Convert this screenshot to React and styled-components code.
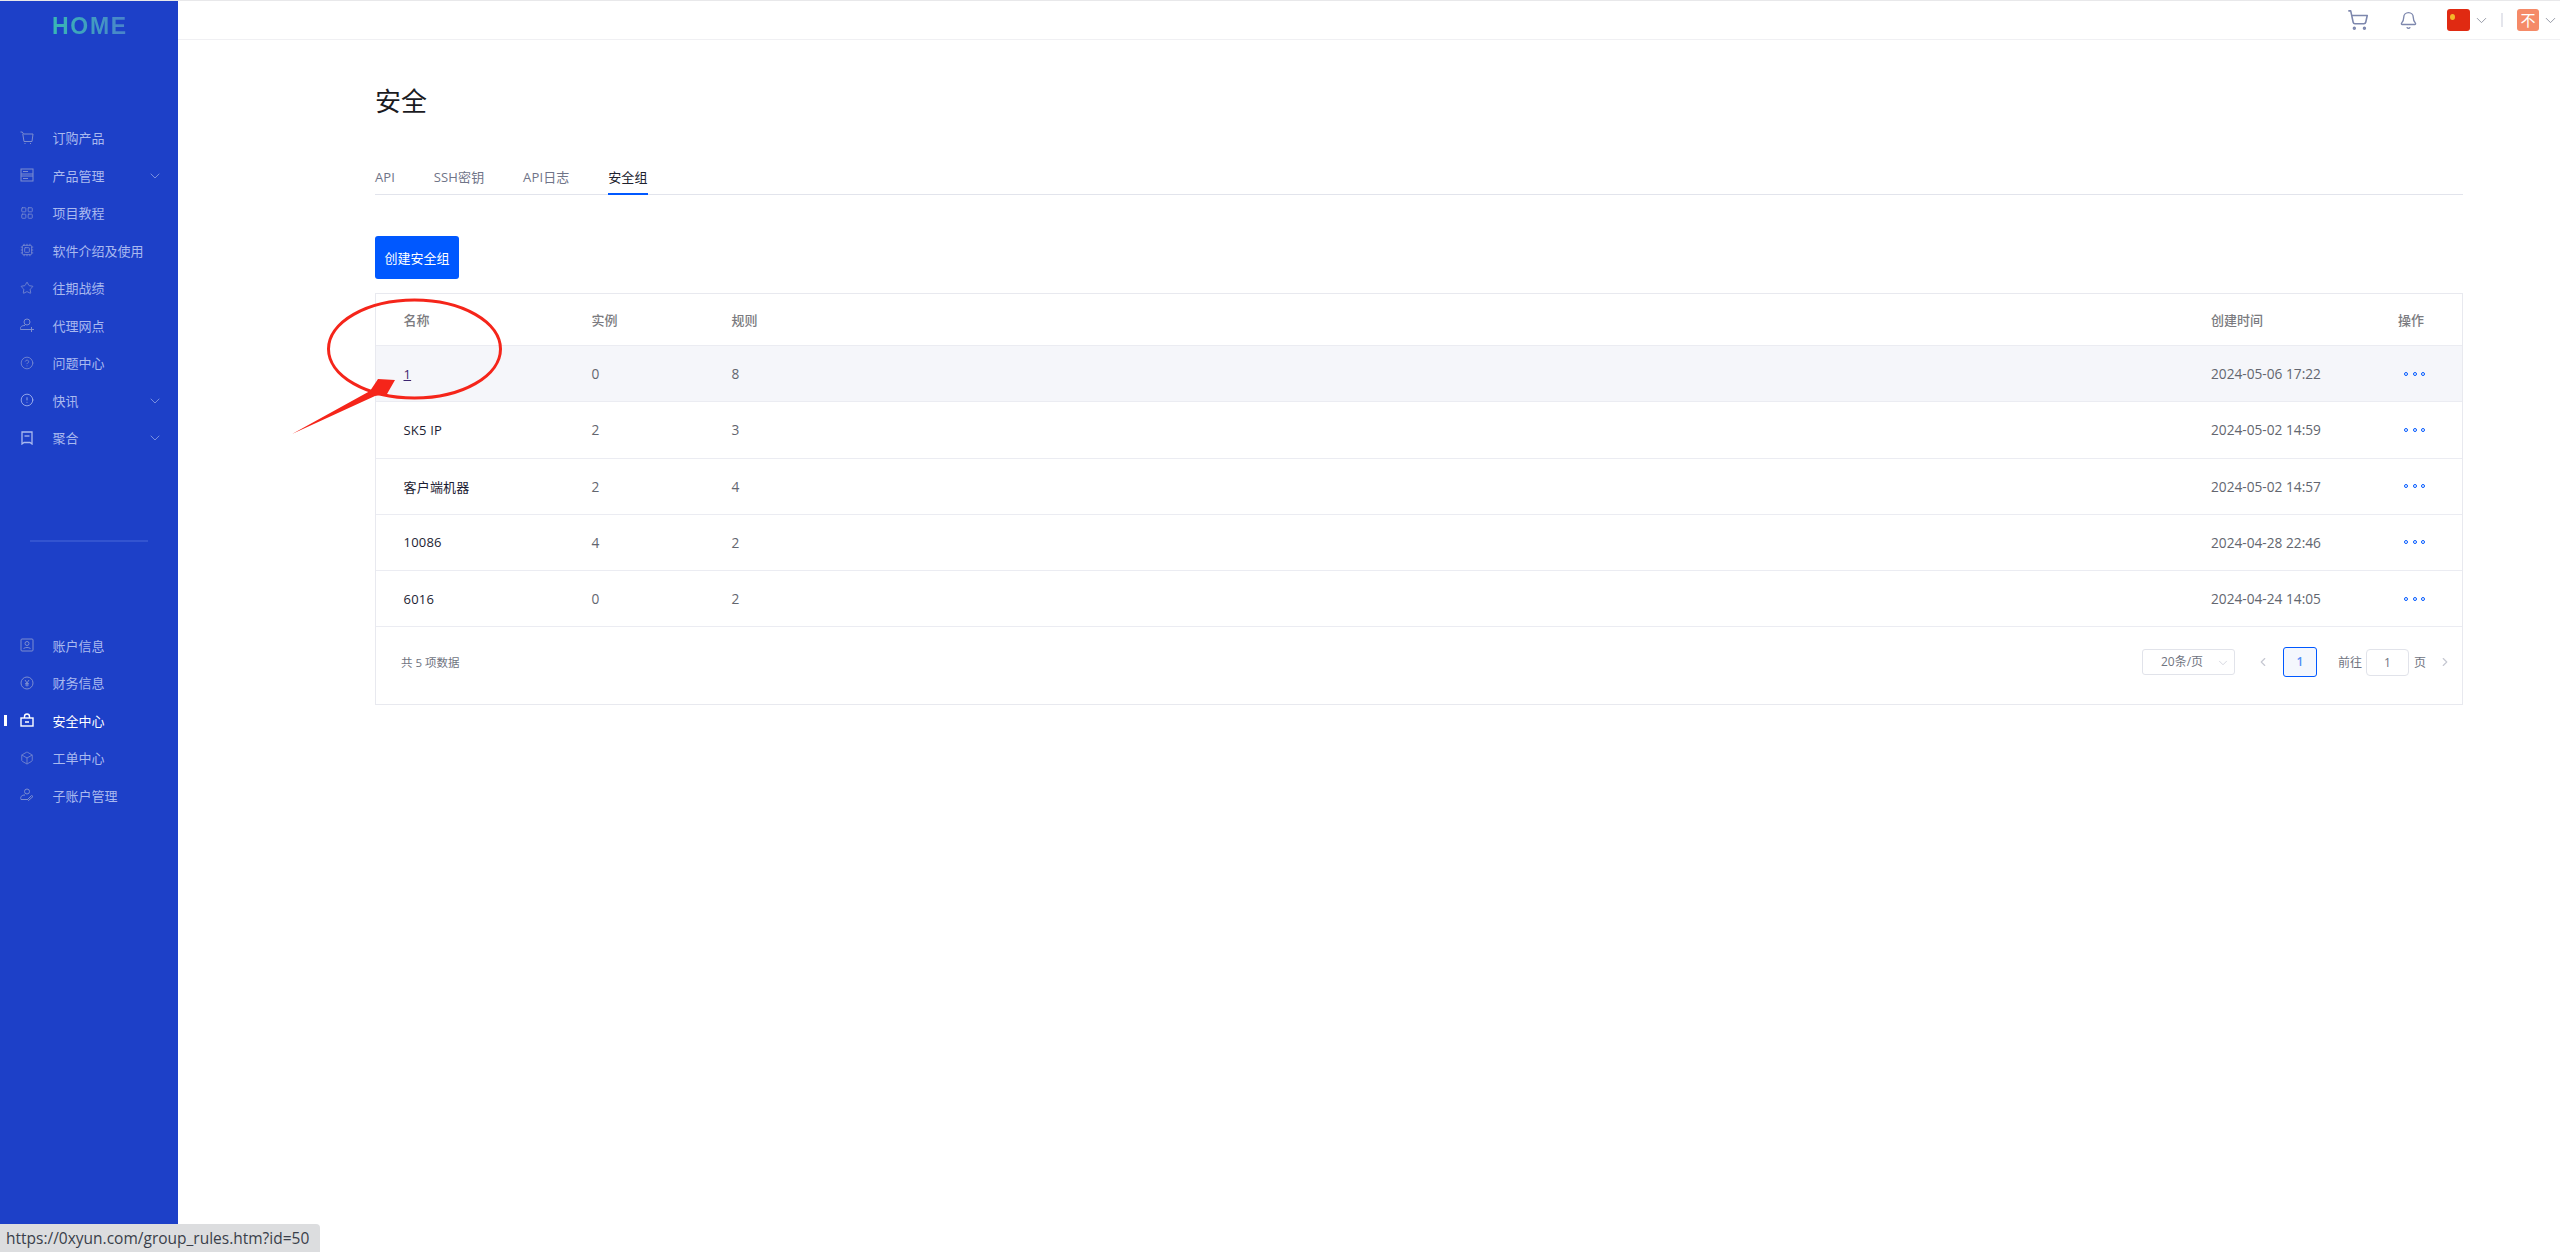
import React from 'react';
import styled, { createGlobalStyle } from 'styled-components';
import {
  Bell,
  Box,
  ChevronDown,
  ChevronLeft,
  ChevronRight,
  CircleAlert,
  CircleHelp,
  Cpu,
  LayoutGrid,
  ShoppingCart,
  Star,
} from 'lucide-react';

const GlobalStyle = createGlobalStyle`
  html, body {
    margin: 0;
    padding: 0;
    background: #fff;
  }
  body {
    font-family: "Open Sans", "Noto Sans CJK SC", sans-serif;
    font-size: 13px;
  }
  * {
    box-sizing: border-box;
  }
`;

const Page = styled.div`
  position: relative;
  display: flex;
  width: 2560px;
  height: 1252px;
  overflow: hidden;
  border-top: 1px solid #e8e8ea;
`;

const Sidebar = styled.aside`
  width: 178px;
  flex-shrink: 0;
  display: flex;
  flex-direction: column;
  background: #1d40c8;
`;

const Logo = styled.div`
  height: 118px;
  padding: 12px 0 0 52px;
  font-family: "Liberation Sans", sans-serif;
  font-size: 23px;
  line-height: 26px;
  font-weight: 700;
  letter-spacing: 1.7px;
  span {
    background: linear-gradient(90deg, #38b8b4, #4a82cc);
    -webkit-background-clip: text;
    background-clip: text;
    color: transparent;
  }
`;

const MenuItem = styled.div`
  position: relative;
  height: 37.5px;
  display: flex;
  align-items: center;
  padding-left: 20px;
  font-size: 13px;
  color: ${(p) => (p.$active ? '#fff' : '#a9b9ef')};
  svg.menu-icon {
    width: 14px;
    height: 14px;
    margin-right: 18.5px;
    flex-shrink: 0;
    color: ${(p) => (p.$active ? '#fff' : p.$bright ? '#a9b9ef' : '#7c8dd0')};
  }
  ${(p) =>
    p.$active &&
    `&::before {
      content: '';
      position: absolute;
      left: 4px;
      top: 13px;
      width: 3px;
      height: 11px;
      background: #fff;
    }`}
`;

const MenuArrow = styled(ChevronDown)`
  position: absolute;
  left: 147px;
  top: 11px;
  color: #8fa2e4;
`;

const SideDivider = styled.div`
  height: 2px;
  margin: 83px 30px 85px;
  background: #3354d0;
`;

const Content = styled.div`
  flex: 1;
  min-width: 0;
  display: flex;
  flex-direction: column;
`;

const TopBar = styled.header`
  height: 39px;
  flex-shrink: 0;
  display: flex;
  align-items: center;
  justify-content: flex-end;
  padding-right: 1.5px;
  border-bottom: 1px solid #f0f0f3;
  color: #7d87ad;
`;

const TopIcon = styled.div`
  display: flex;
  margin-right: ${(p) => p.$gap}px;
`;

const Flag = styled.div`
  position: relative;
  width: 23px;
  height: 22px;
  border-radius: 3px;
  background: #e02a12;
  margin-right: 2.5px;
  &::after {
    content: '';
    position: absolute;
    left: 3px;
    top: 5px;
    width: 5px;
    height: 6px;
    border-radius: 50%;
    background: #f5b72a;
  }
`;

const Separator = styled.div`
  width: 2px;
  height: 14px;
  background: #e4e5ec;
  margin: 0 14px 0 11.5px;
`;

const Avatar = styled.div`
  width: 22px;
  height: 22px;
  border-radius: 3px;
  background: #f58a68;
  color: #fff;
  font-size: 15px;
  line-height: 22px;
  text-align: center;
  margin-right: 2.5px;
`;

const Main = styled.main`
  padding: 44px 97px 0 197px;
`;

const Title = styled.h1`
  margin: 0;
  font-size: 26px;
  line-height: 34px;
  font-weight: 400;
  color: #1b1b1f;
`;

const Tabs = styled.div`
  display: flex;
  gap: 38.7px;
  height: 37px;
  margin-top: 40px;
  border-bottom: 1px solid #e2e4ec;
`;

const Tab = styled.div`
  height: 37px;
  font-size: 13px;
  letter-spacing: 0.15px;
  line-height: 39px;
  color: ${(p) => (p.$active ? '#20222e' : '#6f7488')};
  ${(p) => p.$active && 'border-bottom: 2px solid #0058ff;'}
`;

const CreateButton = styled.button`
  display: block;
  width: 84px;
  height: 43px;
  margin-top: 41px;
  padding: 0;
  border: 0;
  border-radius: 3px;
  background: #0058ff;
  color: #fff;
  font: inherit;
  font-size: 13px;
`;

const TableBox = styled.div`
  margin-top: 14px;
  border: 1.5px solid #e8e9ef;
  height: 412px;
`;

const Row = styled.div`
  display: grid;
  grid-template-columns: 188px 140px 1fr 187px 64px;
  align-items: center;
  height: ${(p) => p.$height || 56.25}px;
  padding-left: 27.5px;
  border-bottom: 1px solid #ebecf2;
  background: ${(p) => (p.$hover ? '#f5f6fa' : '#fff')};
  color: #63666f;
  font-size: 13px;
`;

const HeadCell = styled.div`
  color: #7b7b80;
  font-weight: 500;
`;

const NameCell = styled.div`
  color: #1c1d33;
  letter-spacing: 0.2px;
`;

const NameLink = styled.a`
  color: #3c2470;
  text-decoration: underline;
`;

const NumberCell = styled.div`
  font-size: 13.7px;
`;

const Dots = styled.div`
  display: flex;
  gap: 4.5px;
  margin-left: 6px;
`;

const Dot = styled.i`
  width: 4px;
  height: 4px;
  border-radius: 50%;
  border: 1.2px solid #0058ff;
`;

const Footer = styled.div`
  display: flex;
  align-items: center;
  height: 70px;
  padding: 0 10px 0 25px;
  color: #70747f;
`;

const Total = styled.div`
  flex: 1;
  font-size: 11.5px;
  margin-top: -1px;
`;

const PageSelect = styled.div`
  position: relative;
  width: 93px;
  height: 26px;
  padding-left: 18px;
  border: 1px solid #e1e3ea;
  border-radius: 3px;
  font-size: 12px;
  line-height: 24px;
  margin-right: 21px;
  color: #70747f;
  svg {
    position: absolute;
    right: 4px;
    top: 6px;
    color: #c4c7d2;
  }
`;

const PageArrow = styled.div`
  display: flex;
  color: #c6c8d2;
  margin-left: ${(p) => p.$offset || 0}px;
`;

const PageCurrent = styled.div`
  width: 34px;
  height: 30px;
  margin: 0 21px 0 13px;
  border: 1px solid #0058ff;
  border-radius: 3px;
  background: #f4f7fd;
  color: #4f8ef7;
  font-size: 12px;
  font-weight: 600;
  line-height: 28px;
  text-align: center;
`;

const PageLabel = styled.span`
  font-size: 12px;
`;

const PageInput = styled.div`
  width: 43px;
  height: 27px;
  margin: 0 5px 0 4px;
  border: 1px solid #e1e3ea;
  border-radius: 4px;
  text-align: center;
  font-size: 12px;
  line-height: 25px;
`;

const Annotation = styled.svg`
  position: absolute;
  left: 280px;
  top: 280px;
  pointer-events: none;
`;

const StatusBar = styled.div`
  position: absolute;
  left: 0;
  bottom: 0;
  width: 320px;
  height: 28px;
  padding-left: 6px;
  border-top-right-radius: 4px;
  background: #dcdddf;
  color: #3a3f4a;
  font-size: 15.5px;
  line-height: 28px;
  white-space: nowrap;
`;

const Icon = ({ children }) => (
  <svg className="menu-icon" viewBox="0 0 14 14" fill="none" stroke="currentColor" strokeWidth="1">
    {children}
  </svg>
);

const menuIcon = { className: 'menu-icon', strokeWidth: 1.4 };

const CartIcon = () => (
  <Icon>
    <path d="M0.5 1h1.8l1.2 2h9.5l-1 7.5H4L2.8 3" />
    <path d="M4.5 12.5h1M10 12.5h1" />
  </Icon>
);
const ServerIcon = () => (
  <Icon>
    <rect x="1" y="1" width="12" height="12" />
    <path d="M1 6h12M1 8h12M3 3.5h5M3 10.5h5" />
  </Icon>
);
const UsersIcon = () => (
  <Icon>
    <circle cx="7" cy="4" r="3" />
    <path d="M5 7.5C1.5 7.5 0 9 0.5 11.5h9M11.5 9v5M9 11.5h5" />
  </Icon>
);
const MarkIcon = () => (
  <Icon>
    <path d="M2 1h10v12l-2-1.500H4L2 13z" strokeWidth="1.300" />
    <path d="M4.500 5h5" strokeWidth="1.300" />
  </Icon>
);
const AccountIcon = () => (
  <Icon>
    <rect x="1" y="1" width="12" height="12" rx="1" />
    <circle cx="7" cy="5.500" r="2" />
    <path d="M3.500 11c.5-2 6.500-2 7 0" />
  </Icon>
);
const MoneyIcon = () => (
  <Icon>
    <circle cx="7" cy="7" r="6" />
    <path d="M5 4l2 3 2-3M7 7v3.500M5.200 7.500h3.600M5.200 9h3.600" />
  </Icon>
);
const LockIcon = () => (
  <Icon>
    <rect x="1" y="5" width="12" height="8" strokeWidth="1.400" />
    <path d="M4.500 5V3.500a2.500 2.500 0 0 1 5 0V5M5 9h4" strokeWidth="1.400" />
  </Icon>
);
const SubUserIcon = () => (
  <Icon>
    <circle cx="7" cy="3.500" r="2.500" />
    <path d="M5 7C1.500 7 0 9 1 11.500h7M8.500 12.500l4.500-4-1.500-1-4 4z" />
  </Icon>
);

const topMenu = [
  { label: '订购产品', icon: <CartIcon /> },
  { label: '产品管理', icon: <ServerIcon />, arrow: true },
  { label: '项目教程', icon: <LayoutGrid {...menuIcon} /> },
  { label: '软件介绍及使用', icon: <Cpu {...menuIcon} /> },
  { label: '往期战绩', icon: <Star {...menuIcon} /> },
  { label: '代理网点', icon: <UsersIcon /> },
  { label: '问题中心', icon: <CircleHelp {...menuIcon} /> },
  { label: '快讯', icon: <CircleAlert {...menuIcon} />, arrow: true, bright: true },
  { label: '聚合', icon: <MarkIcon />, arrow: true, bright: true },
];

const bottomMenu = [
  { label: '账户信息', icon: <AccountIcon /> },
  { label: '财务信息', icon: <MoneyIcon /> },
  { label: '安全中心', icon: <LockIcon />, active: true },
  { label: '工单中心', icon: <Box {...menuIcon} /> },
  { label: '子账户管理', icon: <SubUserIcon /> },
];

const groups = [
  { name: '1', instances: 0, rules: 8, created: '2024-05-06 17:22', link: true },
  { name: 'SK5 IP', instances: 2, rules: 3, created: '2024-05-02 14:59' },
  { name: '客户端机器', instances: 2, rules: 4, created: '2024-05-02 14:57' },
  { name: '10086', instances: 4, rules: 2, created: '2024-04-28 22:46' },
  { name: '6016', instances: 0, rules: 2, created: '2024-04-24 14:05' },
];

const renderMenu = (items) =>
  items.map((item) => (
    <MenuItem key={item.label} $active={item.active} $bright={item.bright}>
      {item.icon}
      {item.label}
      {item.arrow && <MenuArrow size={16} strokeWidth={1.2} />}
    </MenuItem>
  ));

export default function App() {
  return (
    <Page>
      <GlobalStyle />
      <Sidebar>
        <Logo>
          <span>HOME</span>
        </Logo>
        {renderMenu(topMenu)}
        <SideDivider />
        {renderMenu(bottomMenu)}
      </Sidebar>

      <Content>
        <TopBar>
          <TopIcon $gap={30}>
            <ShoppingCart size={22} strokeWidth={1.7} />
          </TopIcon>
          <TopIcon $gap={29.5}>
            <Bell size={19} strokeWidth={1.7} />
          </TopIcon>
          <Flag />
          <ChevronDown size={17} strokeWidth={1.3} color="#8f93a0" />
          <Separator />
          <Avatar>不</Avatar>
          <ChevronDown size={17} strokeWidth={1.3} color="#8f93a0" />
        </TopBar>

        <Main>
          <Title>安全</Title>
          <Tabs>
            <Tab>API</Tab>
            <Tab>SSH密钥</Tab>
            <Tab>API日志</Tab>
            <Tab $active>安全组</Tab>
          </Tabs>
          <CreateButton>创建安全组</CreateButton>

          <TableBox>
            <Row $height={52}>
              <HeadCell>名称</HeadCell>
              <HeadCell>实例</HeadCell>
              <HeadCell>规则</HeadCell>
              <HeadCell>创建时间</HeadCell>
              <HeadCell>操作</HeadCell>
            </Row>
            {groups.map((group) => (
              <Row key={group.name} $hover={group.link}>
                <NameCell>
                  {group.link ? <NameLink>{group.name}</NameLink> : group.name}
                </NameCell>
                <NumberCell>{group.instances}</NumberCell>
                <NumberCell>{group.rules}</NumberCell>
                <NumberCell>{group.created}</NumberCell>
                <Dots>
                  <Dot />
                  <Dot />
                  <Dot />
                </Dots>
              </Row>
            ))}
            <Footer>
              <Total>共 5 项数据</Total>
              <PageSelect>
                20条/页
                <ChevronDown size={14} strokeWidth={1.2} />
              </PageSelect>
              <PageArrow>
                <ChevronLeft size={14} />
              </PageArrow>
              <PageCurrent>1</PageCurrent>
              <PageLabel>前往</PageLabel>
              <PageInput>1</PageInput>
              <PageLabel>页</PageLabel>
              <PageArrow $offset={12}>
                <ChevronRight size={14} />
              </PageArrow>
            </Footer>
          </TableBox>
        </Main>
      </Content>

      <Annotation width="240" height="170" viewBox="0 0 240 170" fill="none">
        <ellipse cx="134.500" cy="68" rx="86" ry="49" stroke="#f5251a" strokeWidth="3" />
        <path d="M12 153L90 110L98 98L115 99L107 113L95 115z" fill="#f5251a" />
      </Annotation>

      <StatusBar>https://0xyun.com/group_rules.htm?id=50</StatusBar>
    </Page>
  );
}
